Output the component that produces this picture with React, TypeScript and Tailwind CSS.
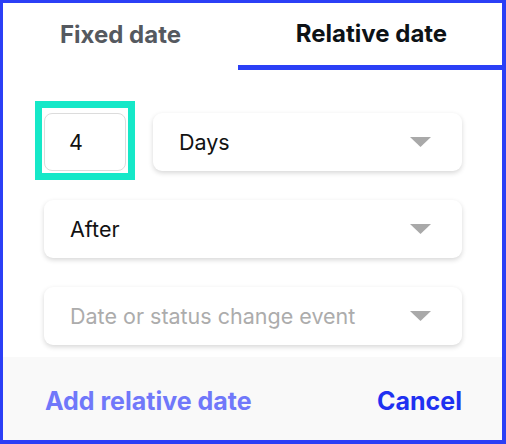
import { useState } from "react";

const font = { fontFamily: "Inter, 'Noto Sans', sans-serif" };

function Caret() {
  return (
    <svg width="21" height="10" viewBox="0 0 21 10" className="shrink-0">
      <path d="M0 0h21L10.5 10z" fill="#a9a9a9" />
    </svg>
  );
}

function Select({ value, placeholder }: { value?: string; placeholder?: string }) {
  return (
    <div className="flex h-[58px] w-full items-center justify-between rounded-[9px] bg-white pl-[26px] pr-[31px] shadow-[0_2px_5px_rgba(0,0,0,0.16)]">
      <span className={`text-[21.5px] ${value ? "text-[#121212]" : "text-[#acacac]"}`}>
        {value ?? placeholder}
      </span>
      <Caret />
    </div>
  );
}

export default function App() {
  const [tab, setTab] = useState<"fixed" | "relative">("relative");

  return (
    <div
      style={font}
      className="flex h-[444px] w-[506px] flex-col border-b-4 border-l-[3px] border-r-4 border-t-[3px] border-[#2b3ff6] bg-white"
    >
      {/* tabs */}
      <div className="flex h-[67px]">
        <button
          onClick={() => setTab("fixed")}
          className={`w-[235px] pb-[3px] text-[24px] font-bold ${
            tab === "fixed" ? "border-b-[5px] border-[#2b3ff6] text-[#0d1216]" : "text-[#55595f]"
          }`}
        >
          Fixed date
        </button>
        <button
          onClick={() => setTab("relative")}
          className={`flex-1 pl-[3px] text-[24px] font-bold ${
            tab === "relative" ? "border-b-[5px] border-[#2b3ff6] text-[#0d1216]" : "pb-[3px] text-[#55595f]"
          }`}
        >
          Relative date
        </button>
      </div>

      {/* body */}
      <div className="flex flex-1 flex-col pl-[41px] pr-[40px] pt-[31px]">
        <div className="flex items-start gap-[18px]">
          <div className="-ml-[9px] border-[7px] border-[#15e8c8] px-[2px] pb-[2px] pt-[5px]">
            <input
              defaultValue="4"
              className="block h-[58px] w-[82px] rounded-[8px] border border-[#dcdcdc] bg-white pl-[24px] text-[21.5px] text-[#111] outline-none"
            />
          </div>
          <div className="mt-[12px] flex-1">
            <Select value="Days" />
          </div>
        </div>
        <div className="mt-[20px]">
          <Select value="After" />
        </div>
        <div className="mt-[29px]">
          <Select placeholder="Date or status change event" />
        </div>
      </div>

      {/* footer */}
      <div className="flex h-[83px] items-center justify-between bg-[#f9f9f9] pl-[42px] pr-[40px] pt-[6px]">
        <button className="text-[25px] font-bold text-[#7078fa]">Add relative date</button>
        <button className="text-[25px] font-bold text-[#1f31f1]">Cancel</button>
      </div>
    </div>
  );
}
